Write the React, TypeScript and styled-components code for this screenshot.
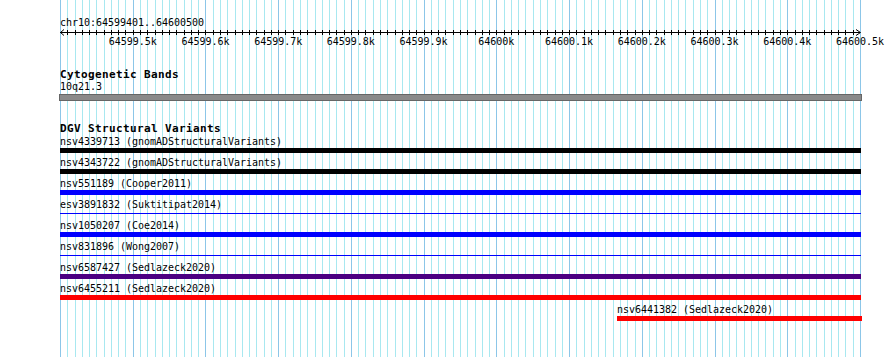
import React from "react";
import styled, { createGlobalStyle } from "styled-components";

const GlobalStyle = createGlobalStyle`
  html, body {
    margin: 0;
    padding: 0;
    background: #fff;
  }
`;

const START = 64599401;
const END = 64600500;
const LEFT = 60;
const SPAN = 800;
const STEPS = 110;
const MAJOR = (SPAN * 10) / STEPS;

const stepX = (i: number) => Math.round(LEFT + (i * SPAN) / STEPS);

const Canvas = styled.div`
  position: relative;
  width: 890px;
  height: 357px;
  overflow: hidden;
  background: #fff;
  color: #000;
  font-family: "DejaVu Sans Mono", "Liberation Mono", monospace;
  font-size: 10px;
  letter-spacing: -0.02px;
`;

// grid lines sit underneath every track
const GridLayer = styled.svg`
  position: absolute;
  left: 0;
  top: 0;
  z-index: 0;
`;

const Content = styled.div`
  position: relative;
  z-index: 1;
  display: flex;
  flex-direction: column;
  padding-top: 16px;
`;

const Text = styled.div<{ $x?: number }>`
  padding-left: ${(p) => p.$x ?? LEFT}px;
  line-height: 13px;
  height: 13px;
  white-space: pre;
`;

const AxisSvg = styled.svg`
  display: block;
`;

const TickRow = styled.div`
  display: flex;
  padding-left: ${LEFT}px;
  line-height: 12px;
  height: 12px;
`;

const TickCell = styled.div`
  width: ${MAJOR}px;
  flex: none;
  display: flex;
  justify-content: flex-end;
`;

const TickLabel = styled.span`
  transform: translateX(50%);
  white-space: pre;
`;

const TrackTitle = styled.div<{ $gap: number }>`
  margin-top: ${(p) => p.$gap}px;
  padding-left: ${LEFT}px;
  font-size: 11px;
  font-weight: bold;
  letter-spacing: 0.38px;
  line-height: 12px;
  height: 12px;
  white-space: pre;
`;

const BandLabel = styled.div`
  padding-left: ${LEFT}px;
  line-height: 12px;
  height: 12px;
`;

const BandBar = styled.div`
  margin: 1px 0 0 59px;
  width: 803px;
  height: 7px;
  box-sizing: border-box;
  background: #8a8a8a;
  border: 1px solid #666;
`;

const VariantRow = styled.div`
  display: flex;
  flex-direction: column;
  margin-bottom: 3px;
`;

const BarSlot = styled.div`
  height: 5px;
  display: flex;
  align-items: center;
`;

const Bar = styled.div<{ $color: string; $thin?: boolean }>`
  flex: none;
  height: ${(p) => (p.$thin ? 1 : 5)}px;
  background: ${(p) => p.$color};
`;

type Variant = {
  id: string;
  study: string;
  color: string;
  thin?: boolean;
  x0: number;
  x1: number;
};

const variants: Variant[] = [
  { id: "nsv4339713", study: "gnomADStructuralVariants", color: "#000", x0: 60, x1: 861 },
  { id: "nsv4343722", study: "gnomADStructuralVariants", color: "#000", x0: 60, x1: 861 },
  { id: "nsv551189", study: "Cooper2011", color: "#0000ff", x0: 60, x1: 861 },
  { id: "esv3891832", study: "Suktitipat2014", color: "#0000ff", thin: true, x0: 60, x1: 861 },
  { id: "nsv1050207", study: "Coe2014", color: "#0000ff", x0: 60, x1: 861 },
  { id: "nsv831896", study: "Wong2007", color: "#0000ff", thin: true, x0: 60, x1: 861 },
  { id: "nsv6587427", study: "Sedlazeck2020", color: "#4b0082", x0: 60, x1: 861 },
  { id: "nsv6455211", study: "Sedlazeck2020", color: "#ff0000", x0: 60, x1: 861 },
  { id: "nsv6441382", study: "Sedlazeck2020", color: "#ff0000", x0: 617, x1: 862 },
];

const majorLabels = [
  "64599.5k",
  "64599.6k",
  "64599.7k",
  "64599.8k",
  "64599.9k",
  "64600k",
  "64600.1k",
  "64600.2k",
  "64600.3k",
  "64600.4k",
  "64600.5k",
];

const Grid = () => {
  const lines = [];
  for (let i = 0; i <= STEPS; i++) {
    lines.push(
      <rect
        key={i}
        x={stepX(i)}
        y={0}
        width={1}
        height={357}
        fill={i % 10 === 0 ? "#8cc6e8" : "#a8e8f0"}
      />
    );
  }
  return (
    <GridLayer width={890} height={357} shapeRendering="crispEdges">
      {lines}
    </GridLayer>
  );
};

const Axis = () => {
  const ticks = [];
  for (let i = 1; i < STEPS; i++) {
    const x = stepX(i) + 0.5;
    ticks.push(<line key={i} x1={x} y1={1} x2={x} y2={6} />);
  }
  return (
    <AxisSvg width={890} height={7}>
      <g stroke="#000" strokeWidth={1} fill="none" shapeRendering="crispEdges">
        <line x1={LEFT} y1={3.5} x2={LEFT + SPAN} y2={3.5} />
        {ticks}
      </g>
      <g stroke="#000" strokeWidth={1} fill="none">
        <polyline points={`${LEFT + 4},0.5 ${LEFT + 0.5},3.5 ${LEFT + 4},6.5`} />
        <polyline
          points={`${LEFT + SPAN - 4},0.5 ${LEFT + SPAN + 0.5},3.5 ${LEFT + SPAN - 4},6.5`}
        />
      </g>
    </AxisSvg>
  );
};

const App = () => {
  return (
    <>
      <GlobalStyle />
      <Canvas>
        <Grid />
        <Content>
          <Text>{`chr10:${START}..${END}`}</Text>
          <Axis />
          <TickRow>
            {majorLabels.map((label) => (
              <TickCell key={label}>
                <TickLabel>{label}</TickLabel>
              </TickCell>
            ))}
          </TickRow>

          <TrackTitle $gap={21}>Cytogenetic Bands</TrackTitle>
          <BandLabel>10q21.3</BandLabel>
          <BandBar />

          <TrackTitle $gap={22}>DGV Structural Variants</TrackTitle>
          {variants.map((v) => (
            <VariantRow key={v.id}>
              <Text $x={v.x0}>{`${v.id} (${v.study})`}</Text>
              <BarSlot>
                <Bar
                  $color={v.color}
                  $thin={v.thin}
                  style={{ marginLeft: v.x0, width: v.x1 - v.x0 }}
                />
              </BarSlot>
            </VariantRow>
          ))}
        </Content>
      </Canvas>
    </>
  );
};

export default App;
